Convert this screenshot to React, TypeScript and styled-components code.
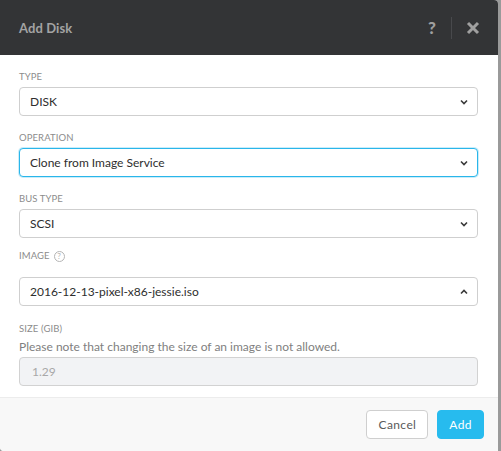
import React from "react";
import styled, { createGlobalStyle } from "styled-components";

const Global = createGlobalStyle`
  html, body { margin: 0; padding: 0; background: #9a9a9a; }
  body { font-family: Lato, "Open Sans", sans-serif; }
  * { box-sizing: border-box; }
`;

const Page = styled.div`
  width: 501px;
  height: 451px;
  background: #9a9a9a;
  display: flex;
`;

const Modal = styled.div`
  width: 498px;
  height: 451px;
  background: #fff;
  border-radius: 0 4px 0 4px;
  overflow: hidden;
  display: flex;
  flex-direction: column;
`;

const Header = styled.div`
  height: 55px;
  background: #333436;
  display: flex;
  align-items: center;
  padding: 0 13px 0 19px;
`;

const Title = styled.div`
  flex: 1;
  color: #a3a3a3;
  font-size: 13px;
  font-weight: 700;
  letter-spacing: 0.1px;
`;

const HeaderIcon = styled.div`
  width: 24px;
  height: 24px;
  display: flex;
  align-items: center;
  justify-content: center;
  color: #a0a0a0;
  font-size: 17px;
  font-weight: 900;
`;

const Divider = styled.div`
  width: 1px;
  height: 22px;
  background: #48494c;
  margin: 0 9px 0 7px;
`;

const Body = styled.div`
  padding: 16px 20px 11px 19px;
  display: flex;
  flex-direction: column;
  border-bottom: 1px solid #ececec;
`;

const Field = styled.div<{ $mt: number }>`
  margin-top: ${(p) => p.$mt}px;
  display: flex;
  flex-direction: column;
`;

const Label = styled.div<{ $mb: number }>`
  height: 12px;
  line-height: 12px;
  font-size: 9.5px;
  color: #8c8c8c;
  text-transform: uppercase;
  letter-spacing: 0.1px;
  margin-bottom: ${(p) => p.$mb}px;
  display: flex;
  align-items: center;
  gap: 4px;
`;

const Help = styled.span`
  width: 11px;
  height: 11px;
  border: 1px solid #b5b5b5;
  border-radius: 50%;
  color: #b0b0b0;
  font-size: 8px;
  line-height: 9px;
  text-align: center;
`;

const Select = styled.div<{ $focus?: boolean }>`
  height: 29px;
  border: 1px solid ${(p) => (p.$focus ? "#2ab6ea" : "#cfcfcf")};
  box-shadow: ${(p) => (p.$focus ? "0 0 0 1px rgba(42,182,234,0.25)" : "none")};
  border-radius: 4px;
  display: flex;
  align-items: center;
  padding: 0 9px 0 10px;
  font-size: 12px;
  color: #2e2e2e;
  background: #fff;
`;

const SelectText = styled.span`
  flex: 1;
`;

const Note = styled.div`
  font-size: 12px;
  line-height: 14px;
  color: #808080;
  margin-bottom: 3px;
`;

const DisabledInput = styled.div`
  height: 29px;
  border: 1px solid #d2d2d2;
  border-radius: 4px;
  background: #f2f3f5;
  display: flex;
  align-items: center;
  padding: 0 12px;
  font-size: 12px;
  color: #a8a8a8;
`;

const Footer = styled.div`
  flex: 1;
  background: #f8f8f8;
  display: flex;
  justify-content: flex-end;
  align-items: flex-start;
  padding: 12px 14px 0 0;
  gap: 9px;
`;

const Button = styled.button<{ $primary?: boolean }>`
  height: 29px;
  padding: 0 11px;
  border-radius: 4px;
  border: 1px solid ${(p) => (p.$primary ? "#27bbee" : "#cfcfcf")};
  background: ${(p) => (p.$primary ? "#27bbee" : "#fff")};
  color: ${(p) => (p.$primary ? "#fff" : "#5a5a5a")};
  font-family: inherit;
  font-size: 12px;
  letter-spacing: 0.4px;
`;

const Chevron = ({ up }: { up?: boolean }) => (
  <svg width="8" height="6" viewBox="0 0 8 6">
    <path
      d={up ? "M1 4.5 L4 1.5 L7 4.5" : "M1 1.5 L4 4.5 L7 1.5"}
      fill="none"
      stroke="#3a3a3a"
      strokeWidth="1.6"
    />
  </svg>
);

const CloseIcon = () => (
  <svg width="14" height="14" viewBox="0 0 14 14">
    <path d="M2 2 L12 12 M12 2 L2 12" stroke="#a0a0a0" strokeWidth="3" />
  </svg>
);

export default function App() {
  return (
    <Page>
      <Global />
      <Modal>
        <Header>
          <Title>Add Disk</Title>
          <HeaderIcon>?</HeaderIcon>
          <Divider />
          <HeaderIcon>
            <CloseIcon />
          </HeaderIcon>
        </Header>
        <Body>
          <Field $mt={0}>
            <Label $mb={4}>Type</Label>
            <Select>
              <SelectText>DISK</SelectText>
              <Chevron />
            </Select>
          </Field>
          <Field $mt={16}>
            <Label $mb={4}>Operation</Label>
            <Select $focus>
              <SelectText>Clone from Image Service</SelectText>
              <Chevron />
            </Select>
          </Field>
          <Field $mt={16}>
            <Label $mb={4}>Bus Type</Label>
            <Select>
              <SelectText>SCSI</SelectText>
              <Chevron />
            </Select>
          </Field>
          <Field $mt={12}>
            <Label $mb={15}>
              Image <Help>?</Help>
            </Label>
            <Select>
              <SelectText>2016-12-13-pixel-x86-jessie.iso</SelectText>
              <Chevron up />
            </Select>
          </Field>
          <Field $mt={17}>
            <Label $mb={5}>Size (GiB)</Label>
            <Note>Please note that changing the size of an image is not allowed.</Note>
            <DisabledInput>1.29</DisabledInput>
          </Field>
        </Body>
        <Footer>
          <Button>Cancel</Button>
          <Button $primary>Add</Button>
        </Footer>
      </Modal>
    </Page>
  );
}
